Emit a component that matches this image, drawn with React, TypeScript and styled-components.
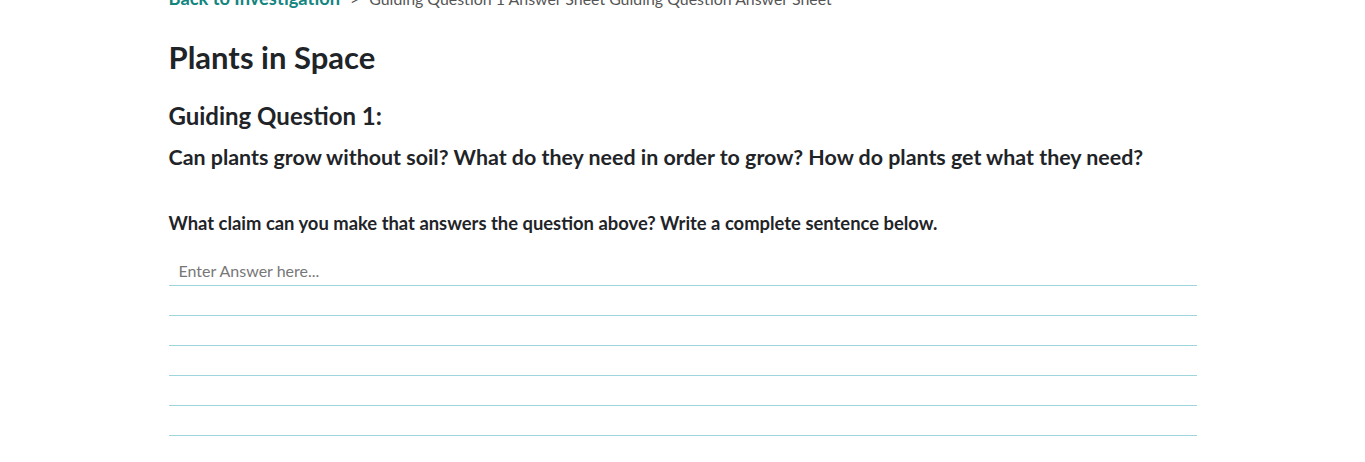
import React from 'react';
import styled, { createGlobalStyle } from 'styled-components';

const GlobalStyle = createGlobalStyle`
  * { box-sizing: border-box; }
  body {
    margin: 0;
    background: #fff;
    font-family: 'Lato', 'Open Sans', sans-serif;
    color: #1f2428;
  }
`;

const ruleColor = '#9ed5da';

const Page = styled.main`
  width: 1028px;
  margin: -14px auto 0;
`;

const Breadcrumb = styled.nav`
  display: flex;
  align-items: baseline;
  gap: 10px;
  font-size: 15.9px;
  line-height: 24px;
  color: #555;
`;

const BackLink = styled.a`
  font-size: 18.3px;
  color: #12857f;
  font-weight: 700;
  text-decoration: none;
`;

const Title = styled.h1`
  margin: 28px 0 0;
  font-size: 31px;
  line-height: 36px;
  font-weight: 700;
`;

const Subtitle = styled.h2`
  margin: 26px 0 0;
  font-size: 24px;
  line-height: 30px;
  font-weight: 700;
`;

const Question = styled.h3`
  margin: 12px 0 0;
  font-size: 21.4px;
  line-height: 28px;
  font-weight: 700;
`;

const Prompt = styled.p`
  margin: 40px 0 0;
  font-size: 18.4px;
  line-height: 24px;
  font-weight: 700;
`;

const AnswerSheet = styled.div`
  margin-top: 20px;
  display: flex;
  flex-direction: column;
`;

const AnswerInput = styled.input`
  display: block;
  width: 100%;
  height: 31px;
  padding: 0 10px;
  border: none;
  border-bottom: 1px solid ${ruleColor};
  outline: none;
  font-family: inherit;
  font-size: 16px;
  line-height: 30px;
  color: #333;
  background: transparent;

  &::placeholder {
    color: #777;
  }
`;

const Rule = styled.div`
  height: 30px;
  border-bottom: 1px solid ${ruleColor};
`;

export default function App() {
  return (
    <>
      <GlobalStyle />
      <Page>
        <Breadcrumb>
          <BackLink href="#">Back to Investigation</BackLink>
          <span>&gt;</span>
          <span>Guiding Question 1 Answer Sheet Guiding Question Answer Sheet</span>
        </Breadcrumb>
        <Title>Plants in Space</Title>
        <Subtitle>Guiding Question 1:</Subtitle>
        <Question>
          Can plants grow without soil? What do they need in order to grow? How do plants get what they need?
        </Question>
        <Prompt>What claim can you make that answers the question above? Write a complete sentence below.</Prompt>
        <AnswerSheet>
          <AnswerInput placeholder="Enter Answer here..." />
          {[0, 1, 2, 3, 4].map((i) => (
            <Rule key={i} />
          ))}
        </AnswerSheet>
      </Page>
    </>
  );
}
